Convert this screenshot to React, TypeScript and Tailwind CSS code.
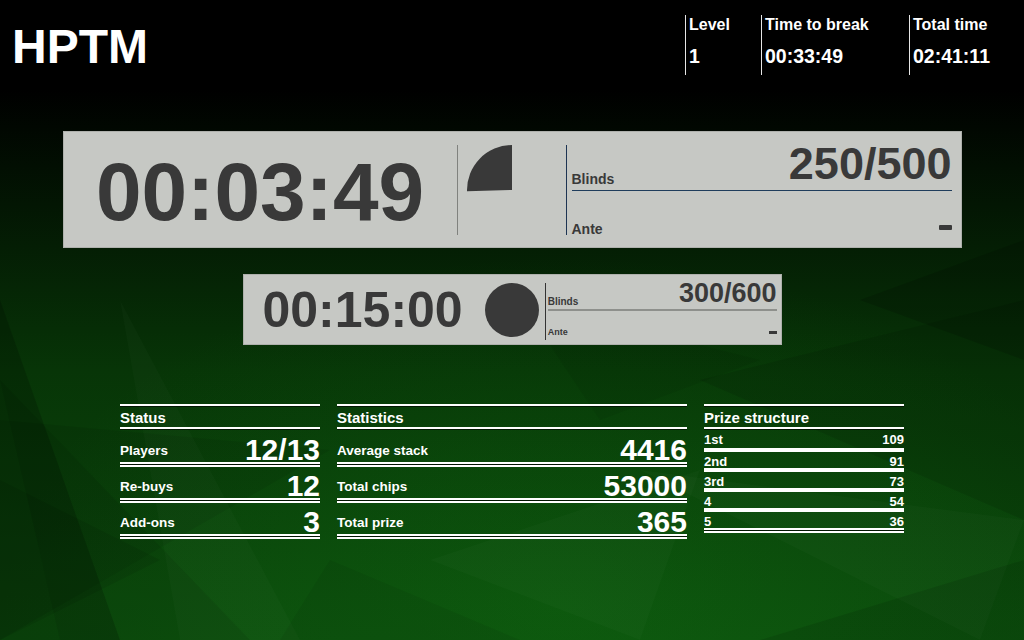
import React from "react";

function Background() {
  return (
    <svg className="absolute inset-0 w-[1024px] h-[640px]" viewBox="0 0 1024 640" preserveAspectRatio="none">
      <defs>
        <linearGradient id="bgv" x1="0" y1="0" x2="0" y2="1">
          <stop offset="0" stopColor="#000000" />
          <stop offset="0.14" stopColor="#000000" />
          <stop offset="0.32" stopColor="#031603" />
          <stop offset="0.58" stopColor="#073507" />
          <stop offset="1" stopColor="#0c4d0d" />
        </linearGradient>
        <radialGradient id="glow" cx="0.55" cy="0.95" r="0.55">
          <stop offset="0" stopColor="#138a14" stopOpacity="0.22" />
          <stop offset="1" stopColor="#138a14" stopOpacity="0" />
        </radialGradient>
      </defs>
      <rect x="0" y="0" width="1024" height="640" fill="url(#bgv)" />
      <rect x="0" y="0" width="1024" height="640" fill="url(#glow)" />
      <g>
        <polygon points="0,300 120,640 0,640" fill="#000" fillOpacity="0.18" />
        <polygon points="0,380 250,640 60,640" fill="#000" fillOpacity="0.08" />
        <polygon points="0,420 330,450 0,640" fill="#000" fillOpacity="0.07" />
        <polygon points="120,300 300,640 180,640" fill="#fff" fillOpacity="0.02" />
        <polygon points="330,560 520,640 280,640" fill="#000" fillOpacity="0.06" />
        <polygon points="700,380 1024,300 1024,520" fill="#000" fillOpacity="0.1" />
        <polygon points="860,300 1024,240 1024,360" fill="#000" fillOpacity="0.15" />
        <polygon points="640,470 1024,520 980,640" fill="#fff" fillOpacity="0.02" />
        <polygon points="760,640 1024,560 1024,640" fill="#000" fillOpacity="0.1" />
        <polygon points="430,560 700,470 640,640" fill="#fff" fillOpacity="0.02" />
        <polygon points="0,480 160,560 0,640" fill="#000" fillOpacity="0.08" />
        <polygon points="520,300 760,360 600,420" fill="#000" fillOpacity="0.06" />
      </g>
    </svg>
  );
}

function HeadCol({ w, label, value }: { w: string; label: string; value: string }) {
  return (
    <div className={`${w} h-[60px] border-l border-[#e6e6e6] pl-[3px] pt-[2px]`}>
      <div className="text-[16px] leading-none font-bold">{label}</div>
      <div className="mt-[14px] text-[19.5px] leading-none font-bold">{value}</div>
    </div>
  );
}

function Pie() {
  const frac = 229 / 900;
  const a = frac * 2 * Math.PI;
  const x = 45 - 45 * Math.sin(a);
  const y = 45 - 45 * Math.cos(a);
  const large = frac > 0.5 ? 1 : 0;
  return (
    <svg width="90" height="90" viewBox="0 0 90 90">
      <path d={`M45 45 L45 0 A45 45 0 ${large} 0 ${x.toFixed(2)} ${y.toFixed(2)} Z`} fill="#393939" />
    </svg>
  );
}

function TopLine() {
  return <div className="h-[3px] border-t-2 border-white bg-black/60" />;
}

function Sep({ h = "h-[5px]" }: { h?: string }) {
  return <div className={`${h} border-y-2 border-white bg-black/70`} />;
}

function StatTable({ title, rows }: { title: string; rows: [string, string][] }) {
  return (
    <div className="flex flex-col">
      <TopLine />
      <div className="h-[20px] flex items-end pb-[2px] text-[15px] leading-none font-bold">{title}</div>
      <TopLine />
      {rows.map(([l, v], i) => (
        <React.Fragment key={l}>
          <div className={`${i === 0 ? "h-[32px]" : "h-[31px]"} flex items-end justify-between`}>
            <span className="mb-[4.5px] text-[13.5px] leading-none font-bold">{l}</span>
            <span className="text-[30px] leading-[25px] font-bold">{v}</span>
          </div>
          <Sep />
        </React.Fragment>
      ))}
    </div>
  );
}

function PrizeTable() {
  const rows: [string, string][] = [
    ["1st", "109"],
    ["2nd", "91"],
    ["3rd", "73"],
    ["4", "54"],
    ["5", "36"],
  ];
  return (
    <div className="flex flex-col">
      <TopLine />
      <div className="h-[20px] flex items-end pb-[2px] text-[15px] leading-none font-bold">Prize structure</div>
      <TopLine />
      {rows.map(([l, v], i) => (
        <React.Fragment key={l}>
          {i === 0 ? (
            <div className="h-[18px] flex items-start justify-between pt-[3px] text-[13px] leading-none font-bold">
              <span>{l}</span>
              <span>{v}</span>
            </div>
          ) : (
            <div className="h-[16px] flex items-end justify-between text-[13px] leading-none font-bold">
              <span>{l}</span>
              <span>{v}</span>
            </div>
          )}
          <Sep h={i === rows.length - 1 ? "h-[5px]" : "h-[4px]"} />
        </React.Fragment>
      ))}
    </div>
  );
}

export default function App() {
  return (
    <div className="relative w-[1024px] h-[640px] overflow-hidden bg-black text-white font-['Liberation_Sans',Arial,sans-serif]">
      <Background />
      <div className="relative flex flex-col items-center">
        <div className="w-full h-[131px] flex justify-between">
          <div className="pl-[12px] pt-[23px] text-[48px] leading-none font-bold">HPTM</div>
          <div className="flex pt-[15px]">
            <HeadCol w="w-[76px]" label="Level" value="1" />
            <HeadCol w="w-[148px]" label="Time to break" value="00:33:49" />
            <HeadCol w="w-[115px]" label="Total time" value="02:41:11" />
          </div>
        </div>

        <div className="flex w-[899px] h-[117px] border border-[#aeb0ac] bg-[#c6c8c4] text-[#393939]">
          <div className="w-[393px] flex items-center justify-center pt-[4px]">
            <span className="text-[82px] leading-none font-bold">00:03:49</span>
          </div>
          <div className="w-px bg-[#80827e] mt-[13px] mb-[12px]" />
          <div className="w-[108px] flex justify-center pt-[13px]">
            <Pie />
          </div>
          <div className="w-px bg-[#1d3452] mt-[13px] mb-[12px]" />
          <div className="flex-1 flex flex-col pl-[5px] pr-[9px] pt-[9px] pb-[11px]">
            <div className="flex items-end justify-between pb-[3.5px] border-b-[1.5px] border-[#1f3d5c]">
              <span className="text-[14px] leading-none font-bold">Blinds</span>
              <span className="text-[45px] leading-none font-bold">250/500</span>
            </div>
            <div className="mt-auto flex items-center justify-between">
              <span className="text-[14px] leading-none font-bold">Ante</span>
              <span className="w-[13px] h-[5px] mb-[3px] rounded-[1px] bg-[#393939]" />
            </div>
          </div>
        </div>

        <div className="mt-[26px] flex w-[539px] h-[71px] border border-[#aeb0ac] bg-[#c6c8c4] text-[#393939]">
          <div className="flex items-center pl-[19px]">
            <span className="text-[50px] leading-none font-bold">00:15:00</span>
            <div className="ml-[22px] w-[54px] h-[54px] rounded-full bg-[#393939]" />
          </div>
          <div className="ml-[6px] w-px bg-[#333333] mt-[8px] mb-[4px]" />
          <div className="flex-1 flex flex-col pl-[2px] pr-[4px] pt-[5px] pb-[7px]">
            <div className="flex items-end justify-between pb-[2px] border-b-2 border-[#8e908c]">
              <span className="text-[10px] leading-none font-bold">Blinds</span>
              <span className="text-[27px] leading-none font-bold">300/600</span>
            </div>
            <div className="mt-auto flex items-center justify-between">
              <span className="text-[9px] leading-none font-bold">Ante</span>
              <span className="w-[8px] h-[3px] bg-[#393939]" />
            </div>
          </div>
        </div>

        <div className="mt-[59px] flex gap-[17px]">
          <div className="w-[200px]">
            <StatTable
              title="Status"
              rows={[
                ["Players", "12/13"],
                ["Re-buys", "12"],
                ["Add-ons", "3"],
              ]}
            />
          </div>
          <div className="w-[350px]">
            <StatTable
              title="Statistics"
              rows={[
                ["Average stack", "4416"],
                ["Total chips", "53000"],
                ["Total prize", "365"],
              ]}
            />
          </div>
          <div className="w-[200px]">
            <PrizeTable />
          </div>
        </div>
      </div>
    </div>
  );
}
